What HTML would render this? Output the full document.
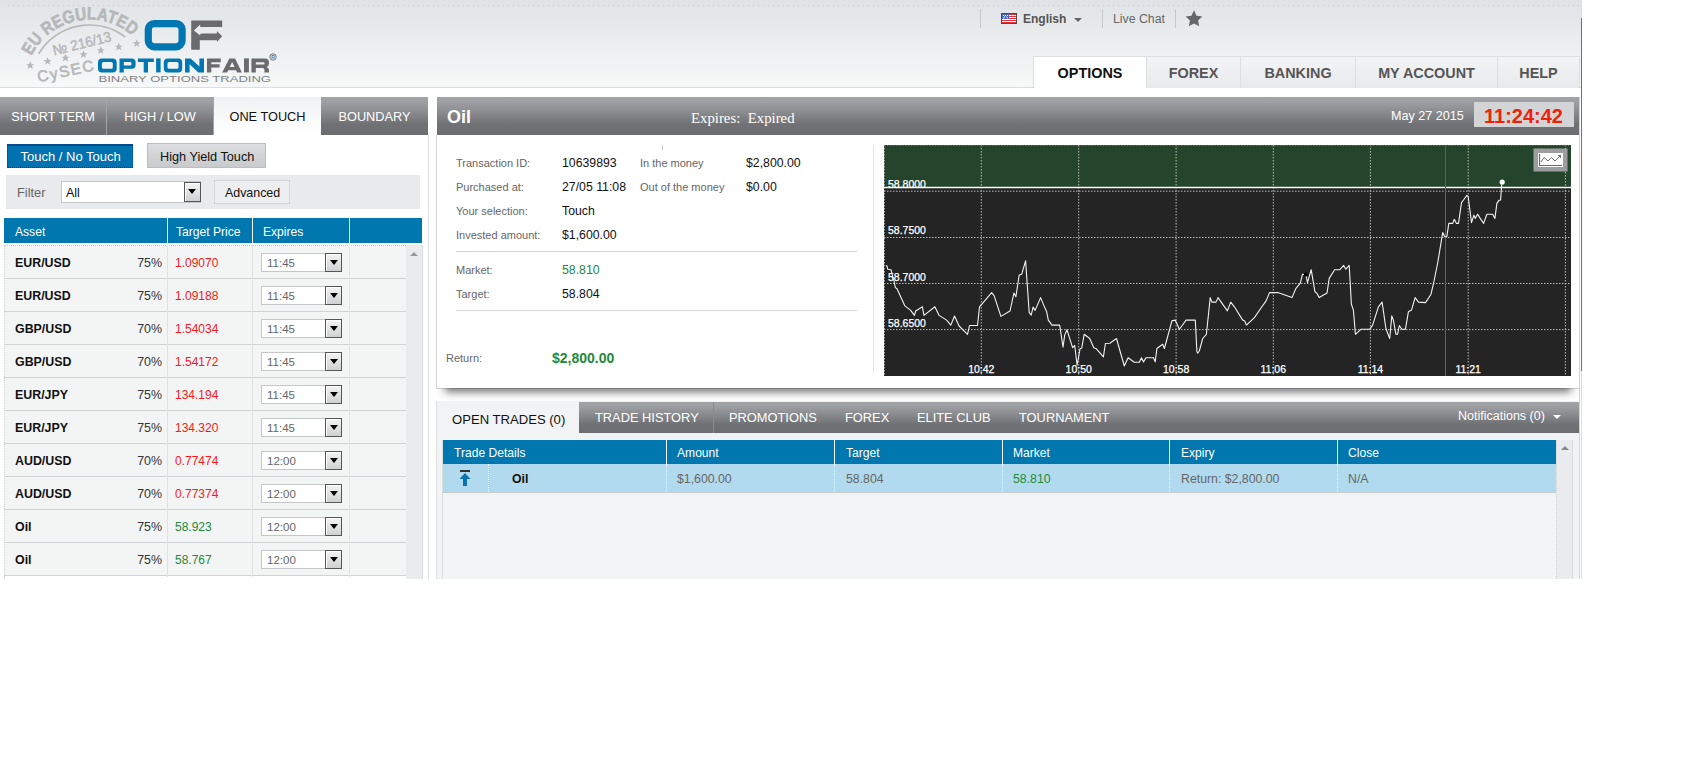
<!DOCTYPE html>
<html><head><meta charset="utf-8">
<style>
*{box-sizing:border-box;margin:0;padding:0}
html,body{width:1706px;height:778px;overflow:hidden;background:#fff;font-family:"Liberation Sans",sans-serif;}
.a{position:absolute}
.t{position:absolute;white-space:pre;line-height:1}
#hdr{left:0;top:0;width:1581px;height:88px;background:linear-gradient(#e0e3e6,#f7f8f8);border-bottom:1px solid #dcdfe2}
#dots{left:8px;top:5px;width:1571px;height:1px;background:repeating-linear-gradient(90deg,#c9cdd1 0,#c9cdd1 1px,transparent 1px,transparent 5px)}
#pageR{left:1581px;top:0;width:1px;height:579px;background:linear-gradient(#dde0e2 0,#dde0e2 18px,#6f7072 18px,#6f7072 371px,#dde0e2 371px)}
.sep{width:1px;background:#c8cbce}
.nav{top:56px;height:32px;background:linear-gradient(#f3f4f5,#e7e9eb);border:1px solid #dcdfe2;border-bottom:none;border-right:none;font-weight:bold;color:#555;font-size:14.4px;text-align:center}
.nav span{position:absolute;left:0;right:0;top:7.6px}
.dbar{background:linear-gradient(#a2a3a6 0%,#9fa0a3 12%,#8a8b8e 40%,#707174 72%,#6c6d70 100%)}
.ltab{top:97px;height:38px;color:#fff;font-size:12.75px;text-align:center;border-right:1px solid #a3a4a7}
.ltab span{position:absolute;left:0;right:0;top:12.4px}
.th{background:#0077ae;color:#fff;font-size:12px}
.row{left:4px;width:402px;height:33px;background:#f3f4f4;border-bottom:1px solid #d0d2d3}
.cell{position:absolute;top:11px;white-space:pre;line-height:1;font-size:12px}
.sel{position:absolute;left:257px;top:6.5px;width:81px;height:19px;background:#fff;border:1px solid #c4c6c8}
.sel span{position:absolute;left:5px;top:4px;font-size:11.5px;color:#666;line-height:1}
.sel i{position:absolute;right:-1px;top:-1px;width:17px;height:19px;border:1px solid #555;box-shadow:inset 1px 1px 0 #fff;background:linear-gradient(#f4f4f4,#cfd0d1)}
.sel i:after{content:"";position:absolute;left:3.5px;top:6.5px;border-left:4.5px solid transparent;border-right:4.5px solid transparent;border-top:5px solid #000}
</style></head><body>
<!-- header -->
<div id="hdr" class="a"></div>
<div id="dots" class="a"></div>
<div id="pageR" class="a"></div>
<div id="logo">
<svg class="a" style="left:0;top:0" width="290" height="88" viewBox="0 0 290 88">
<defs>
<path id="eu" d="M31.4,56.0 A64.8,64.8 0 0 1 132.5,35.9"/>
</defs>
<g fill="#b5b7b9">
<text font-family="Liberation Sans" font-weight="bold" font-size="17.8" stroke="#b5b7b9" stroke-width="0.6"><textPath href="#eu" textLength="119.0" lengthAdjust="spacingAndGlyphs">EU REGULATED</textPath></text>
<path d="M38.6,53.9 A59.5,59.5 0 0 1 125.3,36.9" fill="none" stroke="#b5b7b9" stroke-width="1.6"/>
<path transform="translate(30.2,65.5) scale(1.3)" d="M0,-3.2 L0.95,-1 3.05,-1 1.35,0.4 2,2.6 0,1.3 -2,2.6 -1.35,0.4 -3.05,-1 -0.95,-1z"/>
<path transform="translate(47.6,61.4) scale(1.3)" d="M0,-3.2 L0.95,-1 3.05,-1 1.35,0.4 2,2.6 0,1.3 -2,2.6 -1.35,0.4 -3.05,-1 -0.95,-1z"/>
<path transform="translate(65.5,58.0) scale(1.3)" d="M0,-3.2 L0.95,-1 3.05,-1 1.35,0.4 2,2.6 0,1.3 -2,2.6 -1.35,0.4 -3.05,-1 -0.95,-1z"/>
<path transform="translate(83.5,54.5) scale(1.3)" d="M0,-3.2 L0.95,-1 3.05,-1 1.35,0.4 2,2.6 0,1.3 -2,2.6 -1.35,0.4 -3.05,-1 -0.95,-1z"/>
<path transform="translate(100.8,50.5) scale(1.3)" d="M0,-3.2 L0.95,-1 3.05,-1 1.35,0.4 2,2.6 0,1.3 -2,2.6 -1.35,0.4 -3.05,-1 -0.95,-1z"/>
<path transform="translate(118.8,47.0) scale(1.3)" d="M0,-3.2 L0.95,-1 3.05,-1 1.35,0.4 2,2.6 0,1.3 -2,2.6 -1.35,0.4 -3.05,-1 -0.95,-1z"/>
<path transform="translate(136.7,43.5) scale(1.3)" d="M0,-3.2 L0.95,-1 3.05,-1 1.35,0.4 2,2.6 0,1.3 -2,2.6 -1.35,0.4 -3.05,-1 -0.95,-1z"/>
<text transform="translate(54,55.5) rotate(-14)" font-family="Liberation Sans" font-size="14.3" stroke="#b5b7b9" stroke-width="0.45" textLength="60" lengthAdjust="spacingAndGlyphs">№ 216/13</text>
<text transform="translate(38.5,82.3) rotate(-12)" font-family="Liberation Sans" font-size="15.5" stroke="#b5b7b9" stroke-width="0.6" letter-spacing="1.6">CySEC</text>
</g>
<rect x="148.3" y="23.6" width="33.8" height="23.2" rx="6" fill="none" stroke="#0077b0" stroke-width="7.2"/>
<path d="M191.2,20.4 H222.2 V27.1 H199.8 V33.6 H216.9 V31 L222.2,36.2 L216.9,41.9 V40.3 H199.8 V49.8 H191.2z" fill="#6b6b6d"/>
<path d="M193.9,30.4 L200.2,24.6 V27.1 H202 V33.6 H200.2 V35.6z" fill="#e9ebed"/>
<g fill="#0077b0" fill-rule="evenodd">
<path d="M102,58.4 H112.7 Q116.7,58.4 116.7,62.4 V68.4 Q116.7,72.4 112.7,72.4 H102 Q98,72.4 98,68.4 V62.4 Q98,58.4 102,58.4 Z M103.4,62.1 Q101.9,62.1 101.9,63.6 V67.3 Q101.9,68.8 103.4,68.8 H111.3 Q112.8,68.8 112.8,67.3 V63.6 Q112.8,62.1 111.3,62.1 Z"/>
<path d="M119.5,72.4 V58.4 H131.8 Q135.6,58.4 135.6,62.2 V65 Q135.6,68.8 131.8,68.8 H123.8 V72.4 Z M123.8,62.1 V65.4 H130.4 Q131.4,65.4 131.4,64.4 V63.1 Q131.4,62.1 130.4,62.1 Z"/>
<path d="M137.9,58.4 H153.8 V62.1 H148 V72.4 H143.7 V62.1 H137.9 Z"/>
<rect x="156.1" y="58.4" width="4.5" height="14"/>
<path d="M167.8,58.4 H178.2 Q182.2,58.4 182.2,62.4 V68.4 Q182.2,72.4 178.2,72.4 H167.8 Q163.8,72.4 163.8,68.4 V62.4 Q163.8,58.4 167.8,58.4 Z M169,62.1 Q167.5,62.1 167.5,63.6 V67.3 Q167.5,68.8 169,68.8 H177 Q178.5,68.8 178.5,67.3 V63.6 Q178.5,62.1 177,62.1 Z"/>
<path d="M185,72.4 V58.4 H190.6 L199.4,66.6 V58.4 H204 V72.4 H198.4 L189.6,64.2 V72.4 Z"/>
</g>
<g fill="#6b6b6d" fill-rule="evenodd">
<path d="M207,72.4 V58.4 H220.8 V62.3 H211.3 V64.3 H219.6 V67.6 H211.3 V72.4 Z"/>
<path d="M222.2,72.4 L229.3,58.4 H235.1 L241.9,72.4 H237.1 L236.1,70.2 H228.2 L227.1,72.4 Z M229.7,67 H234.6 L232.15,61.9 Z"/>
<rect x="244" y="58.4" width="4.9" height="14"/>
<path d="M251.4,72.4 V58.4 H265 Q269,58.4 269,62.4 V63.2 Q269,66.2 266.6,66.9 Q269,67.6 269,70.2 V72.4 H264.4 V69.8 Q264.4,68 262.6,68 H255.8 V72.4 Z M255.8,62.2 V64.6 H263.6 Q264.5,64.6 264.5,63.7 V63.1 Q264.5,62.2 263.6,62.2 Z"/>
</g>
<circle cx="273" cy="57" r="3.2" fill="none" stroke="#6b6b6d" stroke-width="0.9"/>
<text x="271.2" y="59" font-family="Liberation Sans" font-weight="bold" font-size="5" fill="#6b6b6d">R</text>
<text x="98.5" y="81.8" font-family="Liberation Sans" font-size="9.6" fill="#808183" textLength="172.5" lengthAdjust="spacingAndGlyphs">BINARY OPTIONS TRADING</text>
</svg>
</div>

<!-- top links -->
<div class="a sep" style="left:980px;top:9px;height:19px"></div>
<div class="a sep" style="left:1102px;top:9px;height:19px"></div>
<div class="a sep" style="left:1175px;top:9px;height:19px"></div>
<svg class="a" style="left:1001px;top:13px" width="16" height="11" viewBox="0 0 16 11">
<rect x="0" y="0" width="16" height="11" fill="#4a4a4a"/>
<rect x="1" y="1" width="14" height="9" fill="#fff"/>
<rect x="1" y="1" width="14" height="1" fill="#e8323c"/><rect x="1" y="3" width="14" height="1" fill="#e8323c"/><rect x="1" y="5" width="14" height="1" fill="#e8323c"/><rect x="1" y="7" width="14" height="1" fill="#e8323c"/><rect x="1" y="9" width="14" height="1" fill="#e8323c"/>
<rect x="1" y="1" width="7" height="5" fill="#4469c8"/>
<g fill="#fff"><rect x="2" y="2" width="1" height="1"/><rect x="4" y="2" width="1" height="1"/><rect x="6" y="2" width="1" height="1"/><rect x="3" y="3.5" width="1" height="1"/><rect x="5" y="3.5" width="1" height="1"/><rect x="2" y="4.5" width="1" height="0.8"/><rect x="6" y="4.5" width="1" height="0.8"/></g>
</svg>
<div class="t" style="left:1023px;top:12.7px;font-size:12px;font-weight:bold;color:#555">English</div>
<div class="a" style="left:1074px;top:18px;border-left:4px solid transparent;border-right:4px solid transparent;border-top:4px solid #666"></div>
<div class="t" style="left:1113px;top:12.7px;font-size:12.3px;color:#666">Live Chat</div>
<svg class="a" style="left:1185px;top:10px" width="18" height="17" viewBox="0 0 24 23"><path d="M12 0.5l3.4 7.2 7.9 1-5.8 5.4 1.5 7.8L12 18.1l-7 3.8 1.5-7.8L0.7 8.7l7.9-1z" fill="#666"/></svg>

<!-- nav tabs -->
<div class="a nav" style="left:1033px;width:113px;background:#fff;color:#111"><span>OPTIONS</span></div>
<div class="a nav" style="left:1146px;width:94px"><span>FOREX</span></div>
<div class="a nav" style="left:1240px;width:115px"><span>BANKING</span></div>
<div class="a nav" style="left:1355px;width:142px"><span>MY ACCOUNT</span></div>
<div class="a nav" style="left:1497px;width:83px;border-right:1px solid #dcdfe2"><span>HELP</span></div>

<!-- left tabs -->
<div class="a dbar" style="left:0;top:97px;width:428px;height:38px"></div>
<div class="a ltab" style="left:0;width:107px"><span>SHORT TERM</span></div>
<div class="a ltab" style="left:107px;width:107px"><span>HIGH / LOW</span></div>
<div class="a ltab" style="left:214px;width:107px;background:linear-gradient(#f0f1f2,#fff);color:#111;border-right:none"><span>ONE TOUCH</span></div>
<div class="a ltab" style="left:321px;width:107px;border-right:none"><span>BOUNDARY</span></div>
<div class="a" style="left:428px;top:135px;width:1px;height:444px;background:#dfe1e3"></div>

<!-- buttons -->
<div class="a" style="left:7px;top:144px;width:126px;height:23.5px;background:#0072b0;border:1px dotted #003f80;border-top:2px solid #004b8c"></div>
<div class="t" style="left:20.5px;top:150px;font-size:13px;color:#fff">Touch / No Touch</div>
<div class="a" style="left:147px;top:143px;width:119px;height:25px;background:linear-gradient(#dcdddf,#c9cacc);border:1px solid #bcbdbf"></div>
<div class="t" style="left:160px;top:150.8px;font-size:12.7px;color:#111">High Yield Touch</div>

<!-- filter -->
<div class="a" style="left:6px;top:175px;width:414px;height:34px;background:#e8eaec"></div>
<div class="t" style="left:17px;top:186.5px;font-size:12.8px;color:#666">Filter</div>
<div class="a" style="left:61px;top:181px;width:140px;height:22px;background:#fff;border:1px solid #c6c8ca"></div>
<div class="t" style="left:66px;top:186.5px;font-size:12.5px;color:#111">All</div>
<div class="a sel2" style="left:184px;top:182px;width:17px;height:20px;border:1px solid #555;box-shadow:inset 1px 1px 0 #fff;background:linear-gradient(#f4f4f4,#cfd0d1)"></div>
<div class="a" style="left:188px;top:189px;border-left:4.5px solid transparent;border-right:4.5px solid transparent;border-top:5px solid #000"></div>
<div class="a" style="left:214px;top:180px;width:76px;height:24px;background:#eceeef;border:1px solid #d3d5d7"></div>
<div class="t" style="left:225px;top:186.8px;font-size:12.4px;color:#111">Advanced</div>

<!-- table header -->
<div class="a th" style="left:4px;top:218px;width:418px;height:25px"></div>
<div class="a" style="left:167px;top:218px;width:1px;height:25px;background:#fff"></div>
<div class="a" style="left:252px;top:218px;width:1px;height:25px;background:#fff"></div>
<div class="a" style="left:349px;top:218px;width:1px;height:25px;background:#fff"></div>
<div class="t" style="left:15px;top:225.6px;font-size:12.1px;color:#fff">Asset</div>
<div class="t" style="left:176px;top:225.6px;font-size:12.1px;color:#fff">Target Price</div>
<div class="t" style="left:263px;top:225.6px;font-size:12.1px;color:#fff">Expires</div>

<!-- rows -->
<div id="rows">
<div class="a" style="left:4px;top:245px;width:402px;height:1px;border-top:1px dotted #c5c7c9"></div>
<div class="a row" style="top:246px"><div class="cell" style="left:11px;font-weight:bold;color:#111;font-size:12.4px">EUR/USD</div><div class="cell" style="right:244px;color:#333;font-size:12.4px">75%</div><div class="cell" style="left:171px;color:#f51a1a">1.09070</div><div class="sel"><span>11:45</span><i></i></div></div>
<div class="a row" style="top:279px"><div class="cell" style="left:11px;font-weight:bold;color:#111;font-size:12.4px">EUR/USD</div><div class="cell" style="right:244px;color:#333;font-size:12.4px">75%</div><div class="cell" style="left:171px;color:#f51a1a">1.09188</div><div class="sel"><span>11:45</span><i></i></div></div>
<div class="a row" style="top:312px"><div class="cell" style="left:11px;font-weight:bold;color:#111;font-size:12.4px">GBP/USD</div><div class="cell" style="right:244px;color:#333;font-size:12.4px">70%</div><div class="cell" style="left:171px;color:#f51a1a">1.54034</div><div class="sel"><span>11:45</span><i></i></div></div>
<div class="a row" style="top:345px"><div class="cell" style="left:11px;font-weight:bold;color:#111;font-size:12.4px">GBP/USD</div><div class="cell" style="right:244px;color:#333;font-size:12.4px">70%</div><div class="cell" style="left:171px;color:#f51a1a">1.54172</div><div class="sel"><span>11:45</span><i></i></div></div>
<div class="a row" style="top:378px"><div class="cell" style="left:11px;font-weight:bold;color:#111;font-size:12.4px">EUR/JPY</div><div class="cell" style="right:244px;color:#333;font-size:12.4px">75%</div><div class="cell" style="left:171px;color:#f51a1a">134.194</div><div class="sel"><span>11:45</span><i></i></div></div>
<div class="a row" style="top:411px"><div class="cell" style="left:11px;font-weight:bold;color:#111;font-size:12.4px">EUR/JPY</div><div class="cell" style="right:244px;color:#333;font-size:12.4px">75%</div><div class="cell" style="left:171px;color:#f51a1a">134.320</div><div class="sel"><span>11:45</span><i></i></div></div>
<div class="a row" style="top:444px"><div class="cell" style="left:11px;font-weight:bold;color:#111;font-size:12.4px">AUD/USD</div><div class="cell" style="right:244px;color:#333;font-size:12.4px">70%</div><div class="cell" style="left:171px;color:#f51a1a">0.77474</div><div class="sel"><span>12:00</span><i></i></div></div>
<div class="a row" style="top:477px"><div class="cell" style="left:11px;font-weight:bold;color:#111;font-size:12.4px">AUD/USD</div><div class="cell" style="right:244px;color:#333;font-size:12.4px">70%</div><div class="cell" style="left:171px;color:#f51a1a">0.77374</div><div class="sel"><span>12:00</span><i></i></div></div>
<div class="a row" style="top:510px"><div class="cell" style="left:11px;font-weight:bold;color:#111;font-size:12.4px">Oil</div><div class="cell" style="right:244px;color:#333;font-size:12.4px">75%</div><div class="cell" style="left:171px;color:#1e8a3a">58.923</div><div class="sel"><span>12:00</span><i></i></div></div>
<div class="a row" style="top:543px"><div class="cell" style="left:11px;font-weight:bold;color:#111;font-size:12.4px">Oil</div><div class="cell" style="right:244px;color:#333;font-size:12.4px">75%</div><div class="cell" style="left:171px;color:#1e8a3a">58.767</div><div class="sel"><span>12:00</span><i></i></div></div>
<div class="a" style="left:167px;top:245px;width:1px;height:332px;background:#dfe1e3"></div><div class="a" style="left:252px;top:245px;width:1px;height:332px;background:#dfe1e3"></div><div class="a" style="left:349px;top:245px;width:1px;height:332px;background:#dfe1e3"></div><div class="a" style="left:4px;top:245px;width:1px;height:334px;border-left:1px dotted #cfd1d3"></div>
</div>
<div class="a" style="left:406px;top:245px;width:17px;height:334px;background:#e9ebed;border-right:1px solid #d8dadc"></div>
<div class="a" style="left:410px;top:252px;border-left:4px solid transparent;border-right:4px solid transparent;border-bottom:4px solid #999"></div>

<!-- middle panel -->
<div class="a dbar" style="left:437px;top:97px;width:1142px;height:38px"></div>
<div class="t" style="left:447px;top:108px;font-size:18px;font-weight:bold;color:#fff">Oil</div>
<div class="t" style="left:691px;top:111.2px;font-family:'Liberation Serif',serif;font-size:14.8px;color:#fff">Expires:  Expired</div>
<div class="t" style="left:1391px;top:110px;font-size:12.6px;color:#fff">May 27 2015</div>
<div class="a" style="left:1474px;top:102px;width:100px;height:25px;background:#d3d4d5"></div>
<div class="t" style="left:1484px;top:106px;font-size:20px;font-weight:bold;color:#f0210a">11:24:42</div>

<div class="a" style="left:436px;top:135px;width:1px;height:254px;background:#d5d7d9"></div>
<div class="a" style="left:437px;top:388px;width:1142px;height:1px;background:#d5d7d9"></div>
<div class="a" style="left:437px;top:135px;width:1142px;height:253px;box-shadow:0 12px 8px -8px rgba(60,60,62,0.72)"></div>
<div class="a" style="left:1579px;top:97px;width:1px;height:482px;background:#d0d2d4"></div>
<div class="a" style="left:873px;top:145px;width:1px;height:228px;background:#e2e4e6"></div>
<div class="a" style="left:662px;top:145px;width:1px;height:5px;background:#ccc"></div>

<div id="details">
<div class="t" style="left:456px;top:158px;font-size:11px;color:#666">Transaction ID:</div>
<div class="t" style="left:562px;top:157px;font-size:12.3px;color:#111">10639893</div>
<div class="t" style="left:640px;top:158px;font-size:11px;color:#666">In the money</div>
<div class="t" style="left:746px;top:157px;font-size:12.3px;color:#111">$2,800.00</div>
<div class="t" style="left:456px;top:182px;font-size:11px;color:#666">Purchased at:</div>
<div class="t" style="left:562px;top:181px;font-size:12.3px;color:#111">27/05 11:08</div>
<div class="t" style="left:640px;top:182px;font-size:11px;color:#666">Out of the money</div>
<div class="t" style="left:746px;top:181px;font-size:12.3px;color:#111">$0.00</div>
<div class="t" style="left:456px;top:206px;font-size:11px;color:#666">Your selection:</div>
<div class="t" style="left:562px;top:205px;font-size:12.3px;color:#111">Touch</div>
<div class="t" style="left:456px;top:230px;font-size:11px;color:#666">Invested amount:</div>
<div class="t" style="left:562px;top:229px;font-size:12.3px;color:#111">$1,600.00</div>
<div class="a" style="left:456px;top:251px;width:401px;height:1px;background:#d3d5d7"></div>
<div class="t" style="left:456px;top:265px;font-size:11px;color:#666">Market:</div>
<div class="t" style="left:562px;top:264px;font-size:12.3px;color:#1e8a3a">58.810</div>
<div class="t" style="left:456px;top:289px;font-size:11px;color:#666">Target:</div>
<div class="t" style="left:562px;top:288px;font-size:12.3px;color:#111">58.804</div>
<div class="a" style="left:456px;top:310px;width:401px;height:1px;background:#d3d5d7"></div>
<div class="t" style="left:446px;top:353px;font-size:11px;color:#666">Return:</div>
<div class="t" style="left:552px;top:351px;font-size:14px;font-weight:bold;color:#1e8a3a">$2,800.00</div>
</div>

<!-- chart -->
<div id="chart">
<svg class="a" style="left:884px;top:145px" width="687" height="231" viewBox="0 0 687 231">
<rect x="0" y="0" width="687" height="231" fill="#242424"/>
<rect x="0" y="0" width="687" height="42" fill="#24452c"/>
<line x1="97.3" y1="0" x2="97.3" y2="231" stroke="#bbb" stroke-width="1" stroke-dasharray="1.5,1.5"/>
<line x1="194.7" y1="0" x2="194.7" y2="231" stroke="#bbb" stroke-width="1" stroke-dasharray="1.5,1.5"/>
<line x1="292.1" y1="0" x2="292.1" y2="231" stroke="#bbb" stroke-width="1" stroke-dasharray="1.5,1.5"/>
<line x1="389.3" y1="0" x2="389.3" y2="231" stroke="#bbb" stroke-width="1" stroke-dasharray="1.5,1.5"/>
<line x1="486.4" y1="0" x2="486.4" y2="231" stroke="#bbb" stroke-width="1" stroke-dasharray="1.5,1.5"/>
<line x1="584.2" y1="0" x2="584.2" y2="231" stroke="#bbb" stroke-width="1" stroke-dasharray="1.5,1.5"/>
<line x1="681.4" y1="0" x2="681.4" y2="231" stroke="#bbb" stroke-width="1" stroke-dasharray="1.5,1.5"/>
<line x1="0" y1="46.2" x2="687" y2="46.2" stroke="#bbb" stroke-width="1" stroke-dasharray="1.5,1.5"/>
<line x1="0" y1="92.5" x2="687" y2="92.5" stroke="#bbb" stroke-width="1" stroke-dasharray="1.5,1.5"/>
<line x1="0" y1="138.5" x2="687" y2="138.5" stroke="#bbb" stroke-width="1" stroke-dasharray="1.5,1.5"/>
<line x1="0" y1="184.6" x2="687" y2="184.6" stroke="#bbb" stroke-width="1" stroke-dasharray="1.5,1.5"/>
<line x1="0.5" y1="0" x2="0.5" y2="231" stroke="#999" stroke-width="1" stroke-dasharray="1.5,1.5"/>
<line x1="0" y1="0.5" x2="687" y2="0.5" stroke="#666" stroke-width="1" stroke-dasharray="1.5,1.5"/>
<line x1="0" y1="42.5" x2="687" y2="42.5" stroke="#fff" stroke-width="1.4"/>
<line x1="561.5" y1="0" x2="561.5" y2="231" stroke="#b2431c" stroke-width="1"/>
<text x="4" y="43" font-family="Liberation Sans" font-size="10.5" fill="#fff" stroke="#fff" stroke-width="0.25">58.8000</text>
<text x="4" y="89" font-family="Liberation Sans" font-size="10.5" fill="#fff" stroke="#fff" stroke-width="0.25">58.7500</text>
<text x="4" y="136" font-family="Liberation Sans" font-size="10.5" fill="#fff" stroke="#fff" stroke-width="0.25">58.7000</text>
<text x="4" y="181.5" font-family="Liberation Sans" font-size="10.5" fill="#fff" stroke="#fff" stroke-width="0.25">58.6500</text>
<text x="97.3" y="228" text-anchor="middle" font-family="Liberation Sans" font-size="10.5" fill="#fff" stroke="#fff" stroke-width="0.25">10:42</text>
<text x="194.7" y="228" text-anchor="middle" font-family="Liberation Sans" font-size="10.5" fill="#fff" stroke="#fff" stroke-width="0.25">10:50</text>
<text x="292.1" y="228" text-anchor="middle" font-family="Liberation Sans" font-size="10.5" fill="#fff" stroke="#fff" stroke-width="0.25">10:58</text>
<text x="389.3" y="228" text-anchor="middle" font-family="Liberation Sans" font-size="10.5" fill="#fff" stroke="#fff" stroke-width="0.25">11:06</text>
<text x="486.4" y="228" text-anchor="middle" font-family="Liberation Sans" font-size="10.5" fill="#fff" stroke="#fff" stroke-width="0.25">11:14</text>
<text x="584.2" y="228" text-anchor="middle" font-family="Liberation Sans" font-size="10.5" fill="#fff" stroke="#fff" stroke-width="0.25">11:21</text>
<path d="M1.7,120.4 L3.0,120.9 L3.7,124.2 L7.0,124.7 L8.3,130.0 L10.0,135.9 L11.4,142.6 L13.0,143.7 L20.9,160.9 L26.7,165.4 L30.4,170.4 L31.7,166.0 L38.4,161.8 L40.0,170.4 L50.9,161.8 L55.1,170.4 L62.6,175.1 L66.8,180.1 L70.5,171.0 L75.1,181.0 L83.5,189.3 L85.5,180.5 L93.5,180.5 L95.5,161.8 L107.7,147.6 L110.2,150.9 L116.9,171.4 L126.0,166.0 L129.9,148.1 L131.9,151.7 L135.2,130.0 L137.7,129.2 L141.6,115.9 L145.2,167.6 L147.2,170.1 L149.1,162.1 L151.1,165.4 L156.6,152.6 L159.7,160.1 L162.7,166.8 L164.3,175.1 L168.0,180.1 L175.7,180.1 L179.0,202.2 L180.7,190.1 L183.0,184.8 L188.6,202.7 L190.7,200.5 L193.1,220.2 L196.1,203.5 L197.7,203.2 L200.2,189.3 L205.7,193.5 L209.8,202.7 L212.4,203.8 L219.4,211.8 L221.4,198.5 L225.8,198.2 L232.5,193.5 L235.3,203.5 L240.3,221.0 L244.1,212.7 L250.3,217.2 L255.3,217.2 L257.5,212.7 L259.5,216.9 L262.0,212.7 L269.5,212.7 L271.2,216.9 L272.9,203.5 L278.7,199.3 L280.4,203.5 L287.9,175.9 L291.2,175.1 L295.4,184.3 L302.1,175.1 L311.3,175.1 L312.9,206.8 L313.7,208.2 L315.3,206.0 L318.7,193.5 L322.4,189.3 L326.2,152.6 L327.9,157.1 L332.0,157.1 L334.0,152.6 L343.4,165.9 L346.7,157.1 L350.4,161.8 L358.7,175.1 L360.7,176.0 L362.4,180.1 L370.4,172.6 L377.9,161.8 L382.1,155.9 L385.5,147.6 L393.8,147.6 L408.0,152.6 L411.8,143.7 L416.3,138.1 L418.5,129.2 L421.9,129.7 L423.5,137.6 L427.2,124.7 L430.9,146.7 L433.0,148.4 L435.2,152.6 L443.0,148.1 L445.2,133.4 L450.6,124.7 L455.9,124.7 L459.7,120.4 L461.8,124.2 L465.2,120.4 L467.4,159.3 L469.4,165.1 L471.4,189.3 L476.9,184.3 L485.7,184.3 L488.6,180.1 L494.4,161.8 L498.1,157.1 L501.9,183.5 L505.7,193.5 L507.8,170.9 L509.4,175.1 L511.9,189.3 L513.6,189.3 L515.3,180.5 L517.8,184.3 L521.4,184.3 L524.4,166.8 L527.5,165.1 L531.1,152.6 L534.5,157.1 L541.5,157.6 L547.0,149.2 L549.5,138.5 L553.6,118.5 L558.7,87.6 L560.8,91.8 L562.8,91.8 L564.8,78.4 L568.7,78.4 L570.3,74.2 L572.5,78.4 L574.5,78.4 L577.5,57.6 L579.5,55.0 L582.9,50.4 L584.2,51.7 L587.5,77.6 L589.9,70.1 L591.2,73.4 L593.7,69.2 L596.2,73.4 L599.6,78.4 L602.9,69.2 L608.7,69.2 L610.9,73.4 L612.9,58.4 L614.9,55.4 L616.6,55.0 L617.9,37.0" fill="none" stroke="#f2f2f2" stroke-width="1.1" stroke-linejoin="round"/>
<circle cx="618.2" cy="37" r="2.6" fill="#fff"/>
<circle cx="421.9000000000001" cy="129.5" r="2" fill="#000"/>
<rect x="649.5" y="3.5" width="34" height="23" fill="#9b9d9f"/>
<rect x="654" y="8" width="25" height="14" fill="#fff"/>
<path d="M655.5,9 V20.5 H678" fill="none" stroke="#6a6a6a" stroke-width="1.2"/>
<path d="M657,17 L660,12.5 L664,16 L667.5,12.5 L671,16 L676,11" fill="none" stroke="#6a6a6a" stroke-width="1"/>
<path d="M673.5,10 L677,10 L677,13.5z" fill="#6a6a6a"/>
</svg>
</div>

<!-- bottom -->
<div id="bottom">
<div class="a" style="left:436px;top:401px;width:1143px;height:178px;background:#f2f3f5;border-left:1px solid #dcdee0"></div>
<div class="a dbar" style="left:579px;top:402px;width:1000px;height:31px"></div>
<div class="a" style="left:713px;top:402px;width:1px;height:31px;background:#8a8b8e"></div>
<div class="t" style="left:452px;top:412.5px;font-size:13.1px;color:#111">OPEN TRADES (0)</div>
<div class="t" style="left:595px;top:411.7px;font-size:12.85px;color:#fff">TRADE HISTORY</div>
<div class="t" style="left:729px;top:411.7px;font-size:12.85px;color:#fff">PROMOTIONS</div>
<div class="t" style="left:845px;top:411.7px;font-size:12.85px;color:#fff">FOREX</div>
<div class="t" style="left:917px;top:411.7px;font-size:12.85px;color:#fff">ELITE CLUB</div>
<div class="t" style="left:1019px;top:411.7px;font-size:12.85px;color:#fff">TOURNAMENT</div>
<div class="t" style="left:1458px;top:410px;font-size:12.5px;color:#fff">Notifications (0)</div>
<div class="a" style="left:1553px;top:415px;border-left:4px solid transparent;border-right:4px solid transparent;border-top:4px solid #fff"></div>
<div class="a" style="left:442px;top:440px;width:1px;height:139px;background:#dcdee0"></div>
<div class="a th" style="left:443px;top:440px;width:1113px;height:24px"></div>
<div class="a" style="left:443px;top:464px;width:1113px;height:29px;background:#b2daee;border-bottom:1px solid #c9cccf"></div>
<div class="a" style="left:1556px;top:440px;width:17px;height:139px;background:#e9ebed;border-left:1px dotted #cfd1d3;border-right:1px solid #d8dadc"></div>
<div class="a" style="left:1561px;top:446px;border-left:4px solid transparent;border-right:4px solid transparent;border-bottom:4px solid #888"></div>
<div class="a" style="left:666px;top:440px;width:1px;height:24px;background:#fff"></div><div class="a" style="left:666px;top:464px;width:1px;height:28px;border-left:1px dotted #eef6fa"></div>
<div class="a" style="left:834px;top:440px;width:1px;height:24px;background:#fff"></div><div class="a" style="left:834px;top:464px;width:1px;height:28px;border-left:1px dotted #eef6fa"></div>
<div class="a" style="left:1002px;top:440px;width:1px;height:24px;background:#fff"></div><div class="a" style="left:1002px;top:464px;width:1px;height:28px;border-left:1px dotted #eef6fa"></div>
<div class="a" style="left:1169px;top:440px;width:1px;height:24px;background:#fff"></div><div class="a" style="left:1169px;top:464px;width:1px;height:28px;border-left:1px dotted #eef6fa"></div>
<div class="a" style="left:1337px;top:440px;width:1px;height:24px;background:#fff"></div><div class="a" style="left:1337px;top:464px;width:1px;height:28px;border-left:1px dotted #eef6fa"></div>
<div class="a" style="left:488px;top:464px;width:1px;height:28px;border-left:1px dotted #fff"></div>
<div class="t" style="left:454px;top:446.6px;font-size:12.1px;color:#fff">Trade Details</div>
<div class="t" style="left:677px;top:446.6px;font-size:12.1px;color:#fff">Amount</div>
<div class="t" style="left:846px;top:446.6px;font-size:12.1px;color:#fff">Target</div>
<div class="t" style="left:1013px;top:446.6px;font-size:12.1px;color:#fff">Market</div>
<div class="t" style="left:1181px;top:446.6px;font-size:12.1px;color:#fff">Expiry</div>
<div class="t" style="left:1348px;top:446.6px;font-size:12.1px;color:#fff">Close</div>
<svg class="a" style="left:459px;top:470px" width="13" height="17" viewBox="0 0 13 17"><rect x="1" y="0" width="10" height="2" fill="#333"/><path d="M6,3 L11.5,9 H8 V16 H4 V9 H0.5z" fill="#0a74b0"/></svg>
<div class="t" style="left:512px;top:472.7px;font-size:12.3px;font-weight:bold;color:#111">Oil</div>
<div class="t" style="left:677px;top:472.7px;font-size:12.3px;color:#666">$1,600.00</div>
<div class="t" style="left:846px;top:472.7px;font-size:12.3px;color:#666">58.804</div>
<div class="t" style="left:1013px;top:472.7px;font-size:12.3px;color:#1e8a3a">58.810</div>
<div class="t" style="left:1181px;top:472.7px;font-size:12.3px;color:#666">Return: $2,800.00</div>
<div class="t" style="left:1348px;top:472.7px;font-size:12.3px;color:#666">N/A</div>
</div>
</body></html>
